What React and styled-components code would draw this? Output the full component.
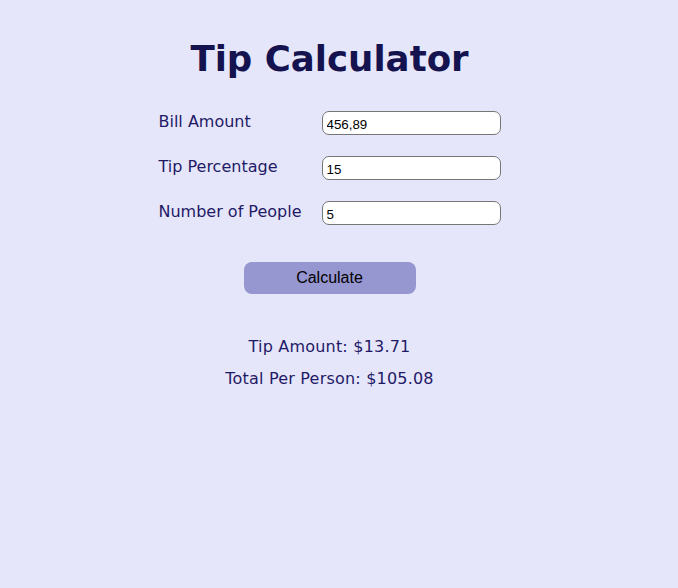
import React, { useState } from "react";
import styled, { createGlobalStyle } from "styled-components";

const Global = createGlobalStyle`
  html, body { margin: 0; padding: 0; background: #e6e6fa; }
  body { font-family: "DejaVu Sans", Verdana, sans-serif; }
`;

const Page = styled.div`
  min-height: 588px;
  background: #e6e6fa;
  display: flex;
  flex-direction: column;
  align-items: center;
  padding: 37px 19px 0 0;
  box-sizing: border-box;
`;

const Title = styled.h1`
  margin: 0 0 30px;
  font-family: "DejaVu Sans", Verdana, sans-serif;
  font-weight: bold;
  font-size: 35.6px;
  line-height: 44px;
  color: #14124f;
`;

const Form = styled.div`
  display: grid;
  grid-template-columns: 163px 179px;
  row-gap: 21px;
  align-items: start;
`;

const Label = styled.label`
  font-size: 16px;
  line-height: 20px;
  color: #1f1a66;
  padding-top: 1px;
`;

const Input = styled.input`
  width: 179px;
  height: 24px;
  box-sizing: border-box;
  border: 1px solid #767676;
  border-radius: 7px;
  background: #fff;
  font-family: "Liberation Sans", Arial, sans-serif;
  font-size: 13.33px;
  color: #000;
  padding: 2px 4px 0;
  outline: none;
`;

const Button = styled.button`
  margin-top: 37px;
  width: 172px;
  height: 32px;
  border: none;
  border-radius: 8px;
  background: #9696d0;
  font-family: "Liberation Sans", Arial, sans-serif;
  font-size: 16px;
  color: #000;
  cursor: pointer;
`;

const Results = styled.div`
  margin-top: 43px;
  display: flex;
  flex-direction: column;
  align-items: center;
  gap: 12px;
`;

const ResultLine = styled.div`
  font-size: 16px;
  letter-spacing: 0.2px;
  line-height: 20px;
  color: #1f1a66;
`;

export default function App() {
  const [bill, setBill] = useState("456,89");
  const [tip, setTip] = useState("15");
  const [people, setPeople] = useState("5");
  return (
    <>
      <Global />
      <Page>
        <Title>Tip Calculator</Title>
        <Form>
          <Label>Bill Amount</Label>
          <Input value={bill} onChange={(e) => setBill(e.target.value)} />
          <Label>Tip Percentage</Label>
          <Input value={tip} onChange={(e) => setTip(e.target.value)} />
          <Label>Number of People</Label>
          <Input value={people} onChange={(e) => setPeople(e.target.value)} />
        </Form>
        <Button>Calculate</Button>
        <Results>
          <ResultLine>Tip Amount: $13.71</ResultLine>
          <ResultLine>Total Per Person: $105.08</ResultLine>
        </Results>
      </Page>
    </>
  );
}
